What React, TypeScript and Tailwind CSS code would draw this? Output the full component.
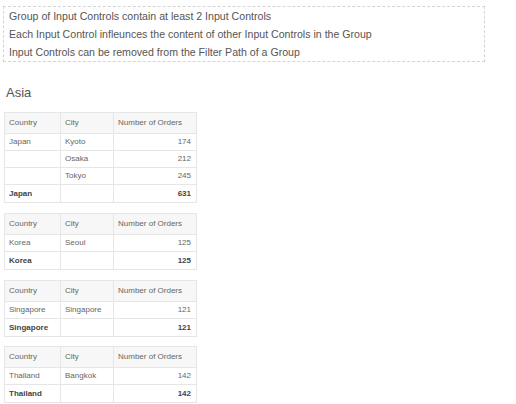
import React from "react";

type Row = { country: string; city: string; n: string; total?: boolean };

const groups: Row[][] = [
  [
    { country: "Japan", city: "Kyoto", n: "174" },
    { country: "", city: "Osaka", n: "212" },
    { country: "", city: "Tokyo", n: "245" },
    { country: "Japan", city: "", n: "631", total: true },
  ],
  [
    { country: "Korea", city: "Seoul", n: "125" },
    { country: "Korea", city: "", n: "125", total: true },
  ],
  [
    { country: "Singapore", city: "Singapore", n: "121" },
    { country: "Singapore", city: "", n: "121", total: true },
  ],
  [
    { country: "Thailand", city: "Bangkok", n: "142" },
    { country: "Thailand", city: "", n: "142", total: true },
  ],
];

const gaps = ["mt-0", "mt-[10px]", "mt-[10px]", "mt-[9px]"];

function Table({ rows, cls }: { rows: Row[]; cls: string }) {
  return (
    <div className={"ml-[4px] w-[193px] border border-[#e6e6e6] text-[8px] text-[#666] " + cls}>
      <div className="grid grid-cols-[56px_53px_82px] h-[21px] bg-[#f7f7f7] border-b border-[#e6e6e6]">
        <div className="flex items-center pl-[4px] border-r border-[#e6e6e6]">Country</div>
        <div className="flex items-center pl-[4px] border-r border-[#e6e6e6]">City</div>
        <div className="flex items-center pl-[4px]">Number of Orders</div>
      </div>
      {rows.map((r, i) => (
        <div
          key={i}
          className={
            "grid grid-cols-[56px_53px_82px] h-[17px] " +
            (i < rows.length - 1 ? "border-b border-[#e6e6e6] " : "") +
            (r.total ? "font-bold text-[#444]" : "")
          }
        >
          <div className="flex items-center pl-[4px] border-r border-[#e6e6e6]">{r.country}</div>
          <div className="flex items-center pl-[4px] border-r border-[#e6e6e6]">{r.city}</div>
          <div className="flex items-center justify-end pr-[5px]">{r.n}</div>
        </div>
      ))}
    </div>
  );
}

export default function App() {
  return (
    <div className="w-[516px] h-[404px] bg-white font-['Liberation_Sans',Arial,sans-serif] overflow-hidden">
      <div className="ml-[3px] pt-[6px]">
        <div className="w-[482px] border border-dashed border-[#d4d4d4] pl-[5px] text-[10.6px] leading-[18px] text-[#555]">
          <div>Group of Input Controls contain at least 2 Input Controls</div>
          <div>Each Input Control infleunces the content of other Input Controls in the Group</div>
          <div>Input Controls can be removed from the Filter Path of a Group</div>
        </div>
      </div>
      <div className="ml-[6px] mt-[23px] text-[13px] leading-[16px] text-[#555]">Asia</div>
      <div className="mt-[11px] flex flex-col">
        {groups.map((g, i) => (
          <Table key={i} rows={g} cls={gaps[i]} />
        ))}
      </div>
    </div>
  );
}
